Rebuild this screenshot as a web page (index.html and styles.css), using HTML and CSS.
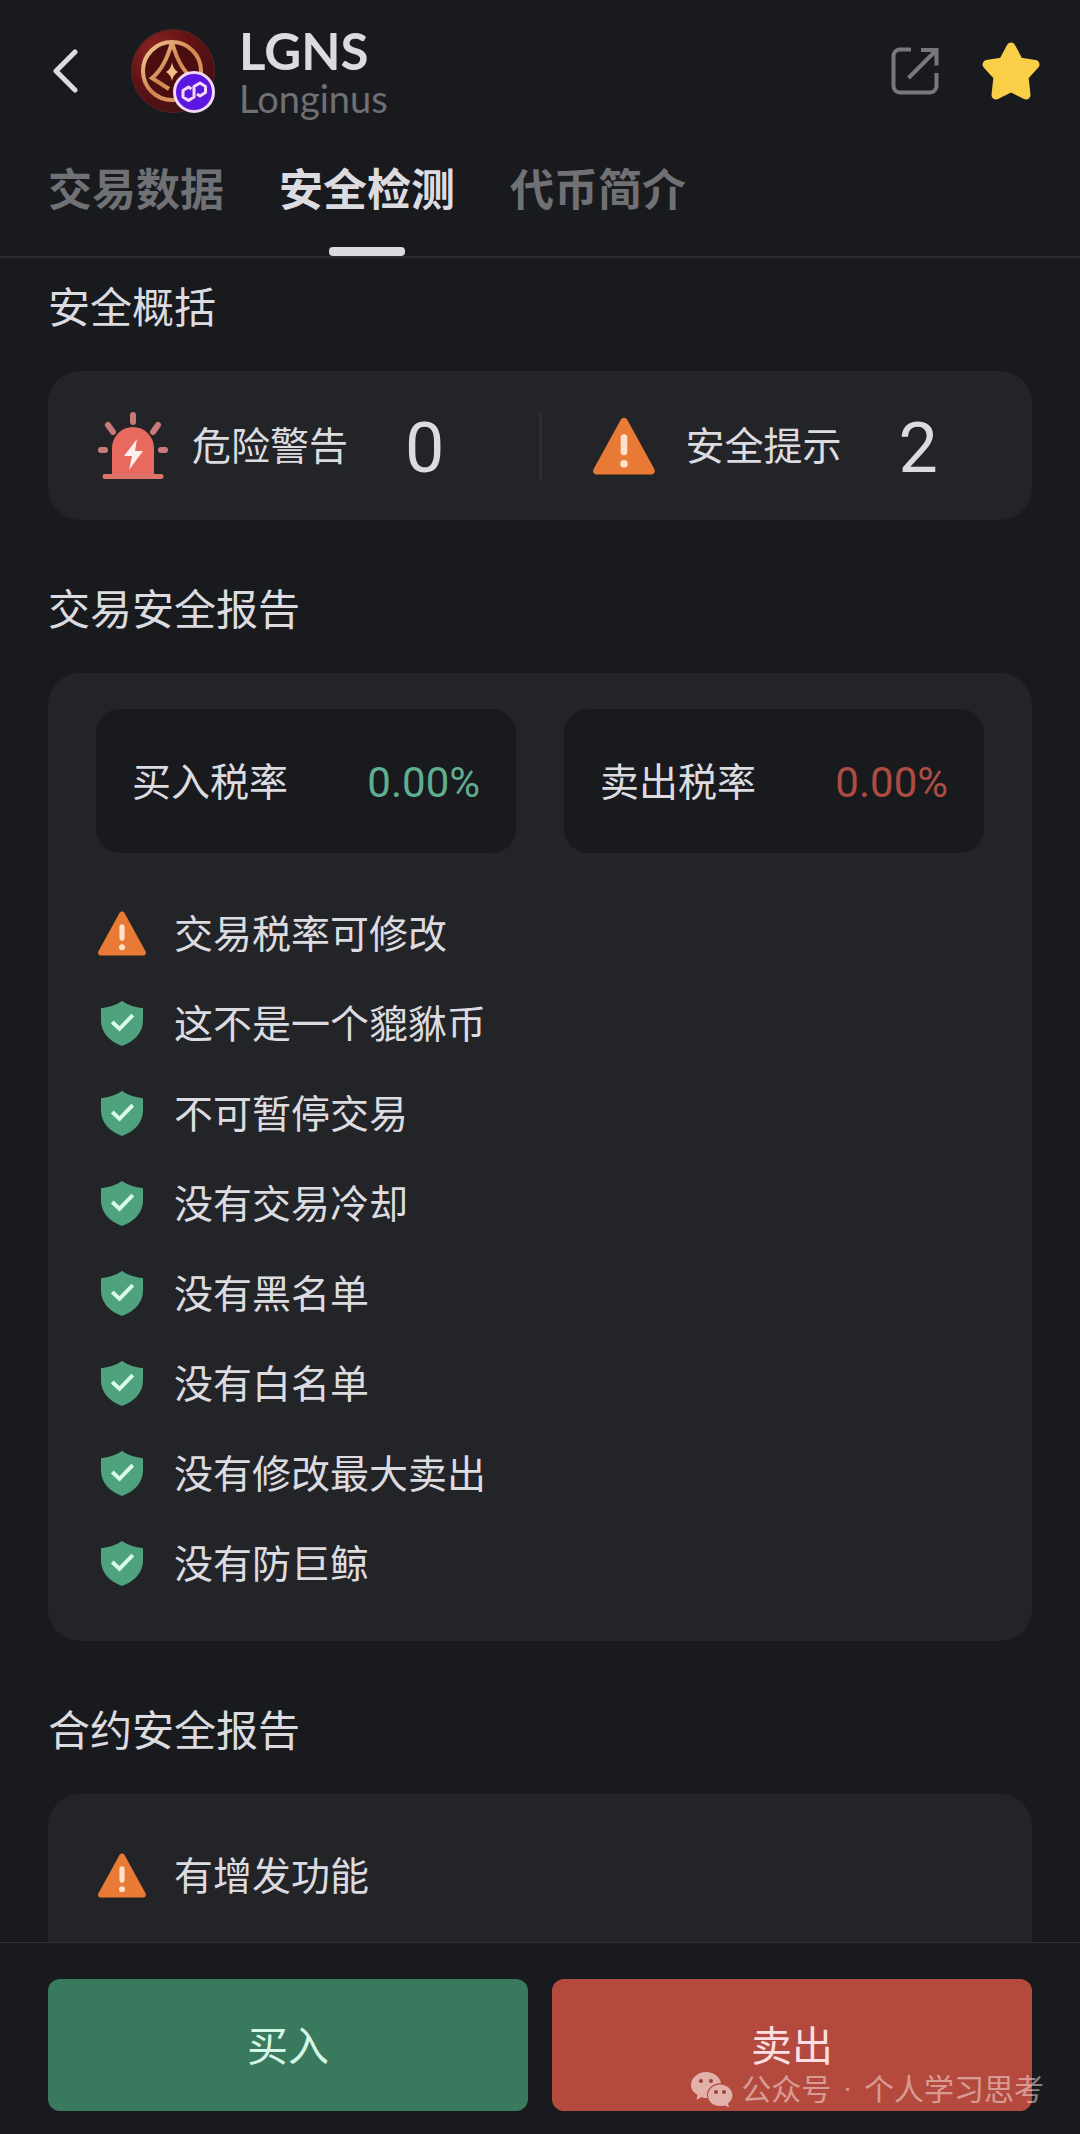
FILE: index.html
```html
<!DOCTYPE html>
<html lang="zh-CN">
<head>
    <meta charset="UTF-8">
    <meta name="viewport" content="width=device-width, initial-scale=1">
    <title>LGNS 安全检测</title>
    <link rel="stylesheet" href="styles.css">
</head>
<body>

<!-- shared icons -->
<svg class="sprite" aria-hidden="true">
    <symbol id="warn" viewBox="0 0 48 44">
        <path d="M21.400 2.200c1.200-2.200 4-2.200 5.200 0L47 39.400c1.100 2-.2 4.200-2.400 4.200H3.400C1.200 43.600-.1 41.400 1 39.400z" fill="#e87a35"/>
        <path d="M24 15.500v11" stroke="#fde3cc" stroke-width="5" stroke-linecap="round"/>
        <circle cx="24" cy="35.500" r="2.900" fill="#fde3cc"/>
    </symbol>
    <symbol id="shield" viewBox="0 0 44 46">
        <path d="M22 0C28 4 35 6.500 43.500 7.500V20C43.500 32 35 41.500 22 46 9 41.500.5 32 .5 20V7.500C9 6.500 16 4 22 0z" fill="#4ea27e"/>
        <path d="M12 21.500l7.500 7L33 14.500" fill="none" stroke="#d9fbe9" stroke-width="4"/>
    </symbol>
</svg>

<header>
    <div class="topbar">
        <button class="icon-btn back" aria-label="返回">
            <svg width="26" height="44" viewBox="0 0 26 44"><path d="M23 3L4 22l19 19" fill="none" stroke="#dcdce0" stroke-width="5" stroke-linecap="round" stroke-linejoin="round"/></svg>
        </button>
        <div class="avatar">
            <svg width="84" height="84" viewBox="0 0 84 84">
                <defs>
                    <radialGradient id="red" cx="0.3" cy="0.25" r="0.85">
                        <stop offset="0" stop-color="#8c2424"/>
                        <stop offset="0.5" stop-color="#621214"/>
                        <stop offset="1" stop-color="#3e1013"/>
                    </radialGradient>
                    <linearGradient id="gold" x1="0" y1="0" x2="1" y2="1">
                        <stop offset="0" stop-color="#f6cd98"/>
                        <stop offset="0.5" stop-color="#cf8450"/>
                        <stop offset="1" stop-color="#e9a96c"/>
                    </linearGradient>
                </defs>
                <circle cx="42" cy="42" r="41.500" fill="url(#red)" stroke="#5a2326"/>
                <circle cx="41" cy="42" r="29" fill="#4a0e10" stroke="url(#gold)" stroke-width="4"/>
                <path d="M41 13C37 28 31 41 21 49L38 60M41 13C45 28 51 41 61 49L44 60" fill="none" stroke="url(#gold)" stroke-width="4"/>
                <path d="M41 33c1 6 3 8 6 10-3 2-5 4-6 9-1-5-3-7-6-9 3-2 5-4 6-10z" fill="#f3bd83"/>
            </svg>
            <svg class="chain" width="42" height="42" viewBox="0 0 42 42">
                <circle cx="21" cy="21" r="19.500" fill="#5b16e0" stroke="#f3d9f6" stroke-width="3"/>
                <path d="M18.500 18L15.500 16 10 19.500V26L15.500 29.500 21 26V15.500L27 12 32.500 15.500V21.500L27 25 24 23" fill="none" stroke="#f3d9f6" stroke-width="3" stroke-linejoin="round"/>
            </svg>
        </div>
        <div class="token">
            <h1>LGNS</h1>
            <p>Longinus</p>
        </div>
        <button class="icon-btn" aria-label="分享">
            <svg width="48" height="48" viewBox="0 0 48 48"><path d="M20 2.500H9A6.500 6.500 0 0 0 2.500 9v30A6.500 6.500 0 0 0 9 45.500h30a6.500 6.500 0 0 0 6.500-6.500V26M30 3h15.500v15.500M45 3.500L17.500 31" fill="none" stroke="#77787b" stroke-width="4"/></svg>
        </button>
        <button class="icon-btn star" aria-label="收藏">
            <svg width="58" height="58" viewBox="0 0 58 58"><path d="M29 5L37 20 53 22.500 42 34.500 44 53 29 45.500 14 53 16 34.500 5 22.500 21 20z" fill="#f9cf47" stroke="#f9cf47" stroke-width="9" stroke-linejoin="round"/></svg>
        </button>
    </div>
    <nav class="tabs">
        <a href="#data">交易数据</a>
        <a href="#safe" class="active">安全检测</a>
        <a href="#intro">代币简介</a>
    </nav>
</header>

<main id="safe">
    <h2>安全概括</h2>
    <section class="card summary">
        <div class="item">
            <svg class="siren" width="70" height="68" viewBox="0 0 70 68">
                <path d="M35 3v7M10 13l5 7M60 13l-5 7M3 38h4M63 38h4" stroke="#c97a78" stroke-width="6" stroke-linecap="round"/>
                <path d="M14 63V36a21 21 0 0 1 42 0v27z" fill="#e8695d"/>
                <path d="M7 64.500h56" stroke="#dd7269" stroke-width="5" stroke-linecap="round"/>
                <path d="M39 27L26 44h8l-3 14 14-19h-8z" fill="#fdeeee"/>
            </svg>
            <span class="label">危险警告</span>
            <span class="count">0</span>
        </div>
        <div class="item">
            <svg class="big-warn" width="64" height="58"><use href="#warn"/></svg>
            <span class="label">安全提示</span>
            <span class="count">2</span>
        </div>
    </section>

    <h2>交易安全报告</h2>
    <section class="card">
        <div class="taxes">
            <div class="tax"><span class="name">买入税率</span><span class="rate up">0.00%</span></div>
            <div class="tax"><span class="name">卖出税率</span><span class="rate down">0.00%</span></div>
        </div>
        <ul>
            <li><svg><use href="#warn"/></svg><span>交易税率可修改</span></li>
            <li><svg><use href="#shield"/></svg><span>这不是一个貔貅币</span></li>
            <li><svg><use href="#shield"/></svg><span>不可暂停交易</span></li>
            <li><svg><use href="#shield"/></svg><span>没有交易冷却</span></li>
            <li><svg><use href="#shield"/></svg><span>没有黑名单</span></li>
            <li><svg><use href="#shield"/></svg><span>没有白名单</span></li>
            <li><svg><use href="#shield"/></svg><span>没有修改最大卖出</span></li>
            <li><svg><use href="#shield"/></svg><span>没有防巨鲸</span></li>
        </ul>
    </section>

    <h2>合约安全报告</h2>
    <section class="card last">
        <ul>
            <li><svg><use href="#warn"/></svg><span>有增发功能</span></li>
        </ul>
    </section>
</main>

<footer>
    <button class="buy">买入</button>
    <button class="sell">卖出</button>
    <div class="mark">
        <svg width="42" height="36" viewBox="0 0 42 36">
            <path d="M15 0c8 0 14 5 15 11-8 0-14 5-14 12 0 1 0 2 .5 3-2 0-4 0-6-1l-5 3 1-5C2 20 0 17 0 13 0 6 7 0 15 0z"/>
            <path d="M29 12.500c7 0 12.500 5 12.500 11 0 3-2 6-4.500 8l1 4-4-2c-1.500.5-3 .5-5 .5-7 0-12-4.500-12-10.500s5-11 12-11z"/>
            <g class="eyes"><circle cx="10" cy="9" r="2"/><circle cx="20" cy="9" r="2"/><circle cx="25" cy="20" r="2"/><circle cx="33" cy="20" r="2"/></g>
        </svg>
        <span>公众号 <span class="dot">·</span> 个人学习思考</span>
    </div>
</footer>

</body>
</html>
```

FILE: styles.css
```css
* {
    box-sizing: border-box;
}
body {
    margin: 0;
    height: 100vh;
    display: flex;
    flex-direction: column;
    background-color: #191a1e;
    color: #dcdce0;
    font-family: "Noto Sans CJK SC", sans-serif;
    font-size: 39px;
}
h1, h2, p, ul {
    margin: 0;
    padding: 0;
}
button {
    border: none;
    padding: 0;
    font-family: inherit;
    cursor: pointer;
}
svg {
    display: block;
    flex: none;
}
.sprite {
    position: absolute;
    width: 0;
    height: 0;
}

/* header */
header {
    border-bottom: 2px solid #2b2c30;
}
.topbar {
    display: flex;
    align-items: center;
    height: 142px;
    padding: 0 40px 0 52px;
}
.icon-btn {
    background: none;
}
.star {
    margin-left: 43px;
}
.avatar {
    position: relative;
    margin: 0 24px 0 53px;
}
.chain {
    position: absolute;
    right: 0;
    bottom: 0;
}
.token {
    flex: 1;
    padding-top: 6px;
    font-family: Lato, sans-serif;
}
.token h1 {
    font-size: 51px;
    line-height: 48px;
}
.token p {
    font-size: 38px;
    line-height: 46px;
    color: #6f7074;
}
.tabs {
    display: flex;
    gap: 55px;
    padding: 0 48px;
}
.tabs a {
    position: relative;
    height: 114px;
    line-height: 90px;
    font-size: 44px;
    font-weight: bold;
    color: #707175;
    text-decoration: none;
}
.tabs .active {
    color: #dcdce0;
}
.tabs .active::after {
    content: "";
    position: absolute;
    left: 50%;
    bottom: 0;
    width: 76px;
    height: 9px;
    margin-left: -38px;
    border-radius: 4px;
    background-color: #dcdce0;
}

/* content */
main {
    flex: 1;
    min-height: 0;
    display: flex;
    flex-direction: column;
    padding: 17px 48px 0;
    overflow: hidden;
}
h2 {
    margin-bottom: 36px;
    font-size: 42px;
    line-height: 60px;
    font-weight: normal;
}
.card {
    flex: none;
    margin-bottom: 57px;
    padding: 36px 48px 33px;
    border-radius: 32px;
    background-color: #232428;
}
.last {
    flex: 1 0 auto;
    margin-bottom: 0;
    border-radius: 32px 32px 0 0;
}
.summary {
    display: flex;
    padding: 41px 0;
}
.item {
    flex: 1;
    display: flex;
    align-items: center;
    height: 67px;
    padding-left: 50px;
}
.item + .item {
    border-left: 3px solid #2d2e32;
}
.label, .name, li span {
    padding-bottom: 5px;
}
.label {
    margin-left: 24px;
}
.big-warn + .label {
    margin-left: 30px;
}
.count {
    margin-left: 57px;
    padding-top: 6px;
    font-family: Roboto, sans-serif;
    font-size: 70px;
    line-height: 67px;
}
.taxes {
    display: flex;
    gap: 48px;
    margin-bottom: 35px;
}
.tax {
    flex: 1;
    display: flex;
    justify-content: space-between;
    align-items: center;
    height: 144px;
    padding: 0 36px;
    border-radius: 24px;
    background-color: #191a1d;
}
.rate {
    padding-top: 2px;
    font-family: Roboto, sans-serif;
    font-size: 42px;
}
.up {
    color: #5fae90;
}
.down {
    color: #ad4c43;
}
li {
    display: flex;
    align-items: center;
    gap: 27px;
    height: 90px;
    padding-left: 1px;
}
li svg {
    width: 50px;
    height: 45px;
}

/* bottom bar */
footer {
    position: relative;
    display: flex;
    gap: 24px;
    padding: 36px 48px 23px;
    border-top: 1px solid #303135;
}
footer button {
    flex: 1;
    height: 132px;
    padding-bottom: 4px;
    border-radius: 12px;
    font-size: 41px;
}
.buy {
    background-color: #39795e;
    color: #d5f7e6;
}
.sell {
    background-color: #b34a3d;
    color: #fbdfe2;
}
.mark {
    position: absolute;
    right: 36px;
    bottom: 24px;
    display: flex;
    align-items: center;
    gap: 8px;
    font-family: Roboto, "Noto Sans CJK SC", sans-serif;
    font-size: 30px;
    line-height: 40px;
    color: rgba(255, 235, 235, 0.5);
}
.mark svg {
    fill: #e3b0aa;
}
.mark .eyes {
    fill: #94453c;
}
.mark .dot {
    margin: 0 5px;
}
```
